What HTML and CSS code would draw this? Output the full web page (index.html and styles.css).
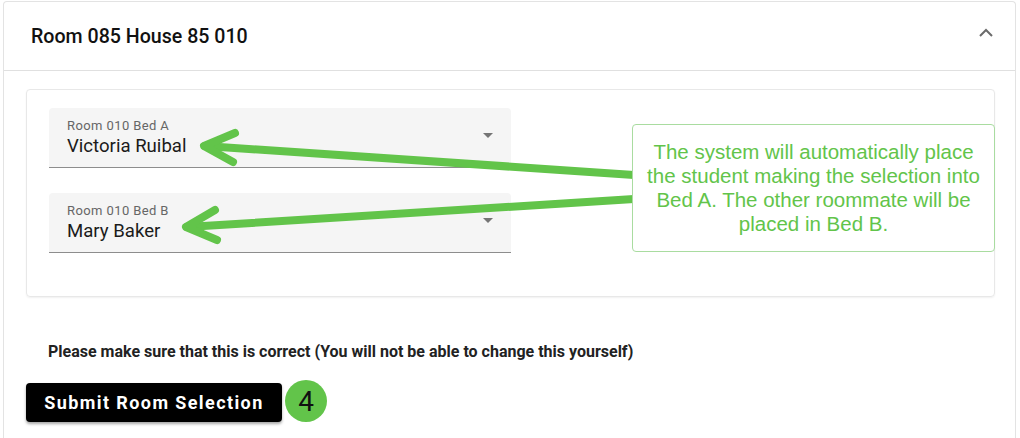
FILE: index.html
```html
<!DOCTYPE html>
<html lang="en">
<head>
    <meta charset="UTF-8">
    <meta name="viewport" content="width=device-width, initial-scale=1.0">
    <title>Room Selection</title>
    <link rel="stylesheet" href="styles.css">
</head>
<body>
    <div class="panel">
        <div class="panel-header">
            <span class="panel-title">Room 085 House 85 010</span>
            <svg class="chevron" width="14" height="10" viewBox="0 0 14 10">
                <path d="M1 8 L7 2 L13 8" fill="none" stroke="#6b6b6b" stroke-width="2"/>
            </svg>
        </div>
        <div class="panel-body">
            <div class="bed-card">
                <div class="select-field">
                    <div class="select-text">
                        <span class="select-label">Room 010 Bed A</span>
                        <span class="select-value">Victoria Ruibal</span>
                    </div>
                    <span class="select-arrow"></span>
                </div>
                <div class="select-field">
                    <div class="select-text">
                        <span class="select-label">Room 010 Bed B</span>
                        <span class="select-value">Mary Baker</span>
                    </div>
                    <span class="select-arrow"></span>
                </div>
            </div>

            <p class="note">Please make sure that this is correct (You will not be able to change this yourself)</p>

            <div class="submit-row">
                <button class="submit-btn">Submit Room Selection</button>
                <span class="step-badge">4</span>
            </div>
        </div>
    </div>

    <!-- annotation layer -->
    <svg class="arrows" width="1020" height="438" viewBox="0 0 1020 438">
        <g fill="none" stroke="#62c44a" stroke-width="8" stroke-linecap="round" stroke-linejoin="round">
            <path d="M634 175 L205 146"/>
            <path d="M235 133 L204 146 L233 162"/>
            <path d="M634 199 L187 227"/>
            <path d="M215 210 L186 227 L217 240"/>
        </g>
    </svg>
    <div class="callout">The system will automatically place the student making the selection into Bed A. The other roommate will be placed in Bed B.</div>
</body>
</html>
```

FILE: styles.css
```css
body {
    margin: 0;
    position: relative;
    width: 1020px;
    height: 438px;
    overflow: hidden;
    background-color: white;
    font-family: Roboto, "Liberation Sans", Arial, sans-serif;
    color: #212121;
}
.panel {
    margin: 1px 0 0 3px;
    width: 1011px;
    height: 436px;
    border: 1px solid #e3e3e3;
    border-bottom: none;
    border-radius: 4px 4px 0 0;
    background-color: white;
}
.panel-header {
    display: flex;
    align-items: center;
    justify-content: space-between;
    height: 68px;
    padding: 0 22px 0 27px;
    border-bottom: 1px solid #e0e0e0;
}
.panel-title {
    font-size: 19.6px;
    font-weight: 500;
    color: #111;
}
.chevron {
    margin-top: -7px;
}
.panel-body {
    padding: 18px 20px 0 22px;
}
.bed-card {
    display: flex;
    flex-direction: column;
    gap: 25px;
    padding: 18px 23px 43px 22px;
    border: 1px solid #e8e8e8;
    border-radius: 4px;
    box-shadow: 0 1px 2px rgba(0,0,0,0.06);
}
.select-field {
    display: flex;
    align-items: center;
    justify-content: space-between;
    width: 462px;
    height: 59px;
    background-color: #f5f5f5;
    border-bottom: 1px solid #8d8d8d;
    border-radius: 4px 4px 0 0;
}
.select-text {
    display: flex;
    flex-direction: column;
    padding-left: 18px;
    margin-top: -1px;
}
.select-label {
    font-size: 13px;
    letter-spacing: 0.4px;
    color: #666;
    line-height: 17px;
}
.select-value {
    font-size: 18.6px;
    color: #1b1b1b;
    line-height: 24px;
}
.select-arrow {
    width: 0;
    height: 0;
    margin-right: 18px;
    margin-top: -4px;
    border-left: 5px solid transparent;
    border-right: 5px solid transparent;
    border-top: 5px solid #757575;
}
.note {
    margin: 45px 0 0 22px;
    font-size: 16px;
    font-weight: bold;
    line-height: 20px;
    color: #222;
}
.submit-row {
    display: flex;
    align-items: center;
    gap: 3px;
    margin-top: 21px;
}
.submit-btn {
    width: 256px;
    height: 39px;
    border: none;
    border-radius: 4px;
    background-color: black;
    color: white;
    font-family: Roboto, "Liberation Sans", Arial, sans-serif;
    font-size: 18px;
    font-weight: bold;
    letter-spacing: 1.4px;
    box-shadow: 0 2px 3px rgba(0,0,0,0.35);
    cursor: pointer;
}
.step-badge {
    display: flex;
    align-items: center;
    justify-content: center;
    width: 42px;
    height: 42px;
    margin-top: -3px;
    border-radius: 50%;
    background-color: #62c44a;
    color: #111;
    font-size: 28px;
}
.arrows {
    position: absolute;
    left: 0;
    top: 0;
    pointer-events: none;
}
.callout {
    position: absolute;
    left: 632px;
    top: 124px;
    width: 343px;
    height: 111px;
    padding: 15px 9px 0 9px;
    border: 1px solid #a9dca0;
    border-radius: 4px;
    background-color: white;
    color: #62c44a;
    font-family: "Liberation Sans", Arial, sans-serif;
    font-size: 20.5px;
    line-height: 24px;
    text-align: center;
}
```
